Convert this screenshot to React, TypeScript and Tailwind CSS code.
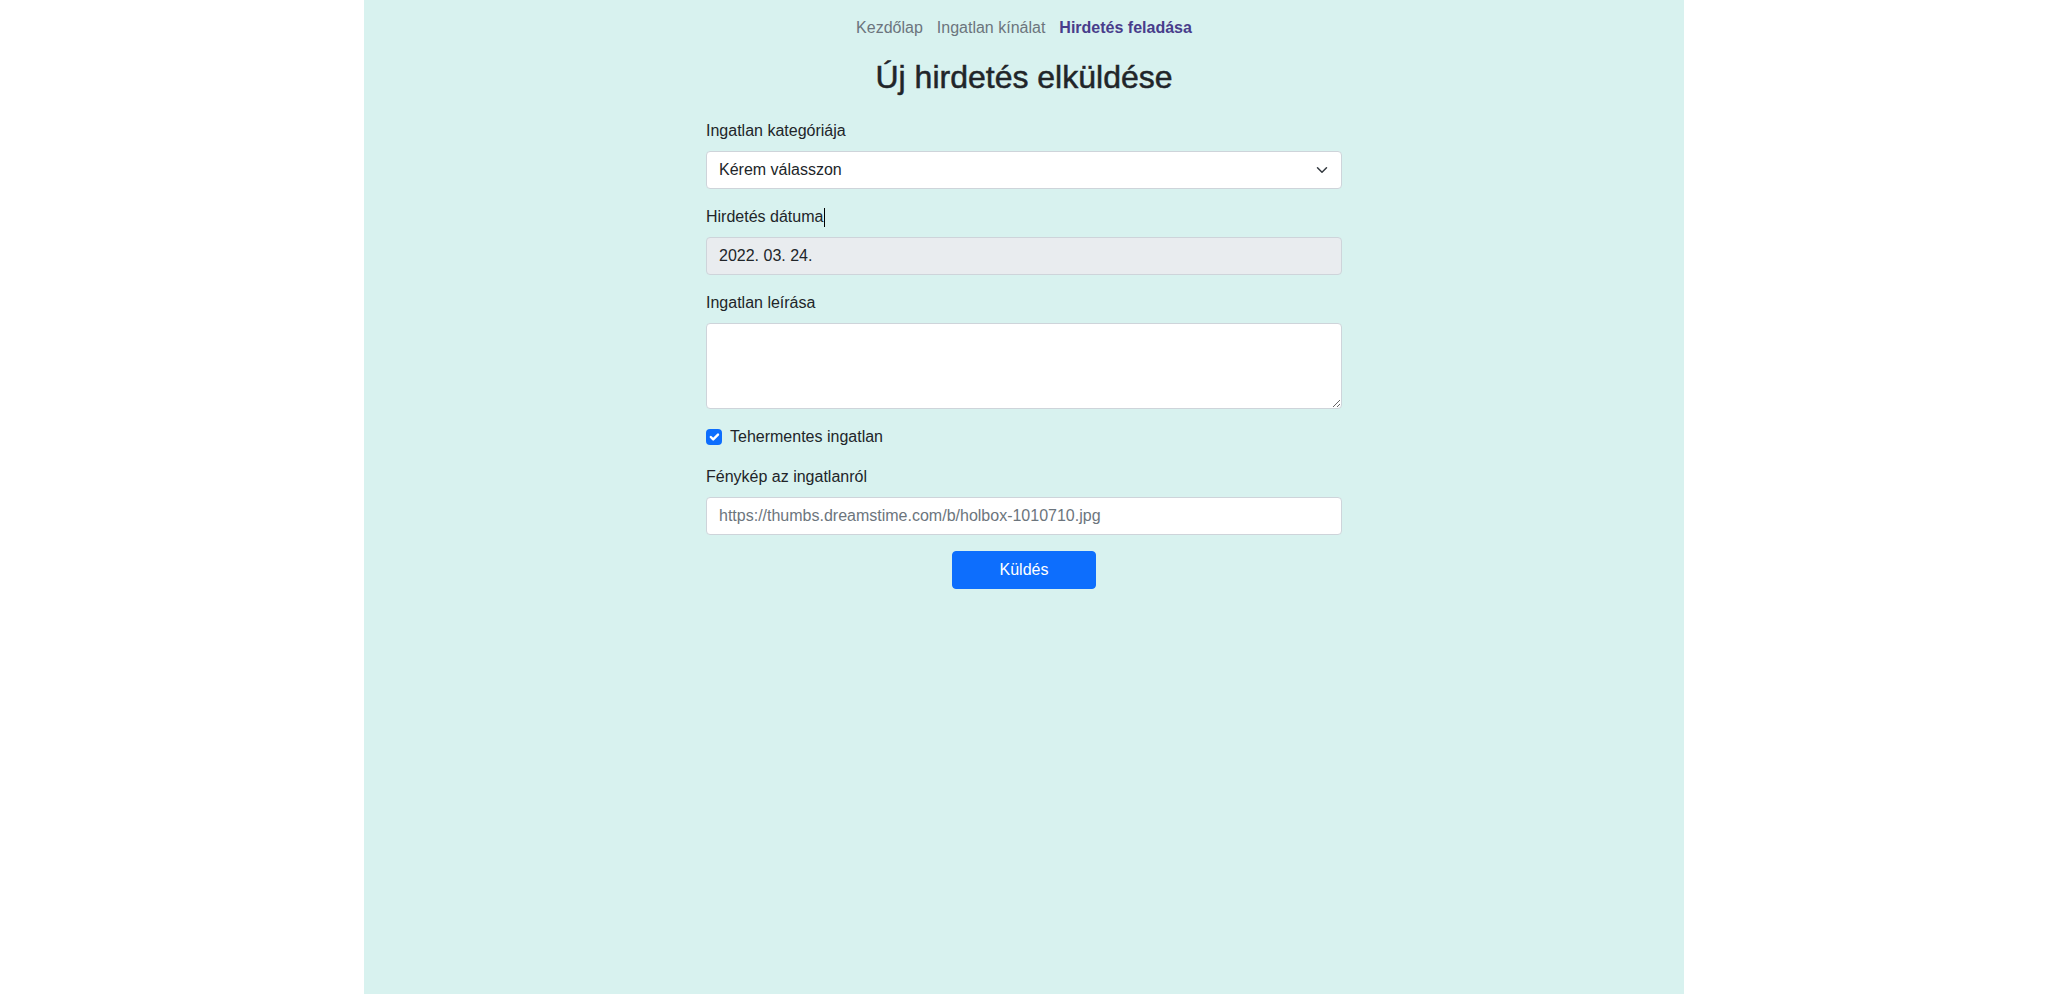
export default function App() {
  return (
    <div className="min-h-screen bg-white font-['Liberation_Sans',Arial,sans-serif] text-[#212529]">
      <div className="mx-auto min-h-screen w-[1320px] bg-[#d8f2ef] px-3">
        <nav className="flex justify-center pt-2 text-base leading-6">
          <a href="#" className="px-[7px] py-2 text-[#6c757d]">
            Kezdőlap
          </a>
          <a href="#" className="px-[7px] py-2 text-[#6c757d]">
            Ingatlan kínálat
          </a>
          <a href="#" className="px-[7px] py-2 font-bold text-[#483d8b]">
            Hirdetés feladása
          </a>
        </nav>

        <h1 className="mt-[10px] text-center text-[32px] font-medium leading-[38px] [-webkit-text-stroke:0.5px_#212529]">
          Új hirdetés elküldése
        </h1>

        <form className="mx-auto mt-[23px] w-[636px] text-base leading-6">
          <div className="mb-4">
            <label className="mb-2 block">Ingatlan kategóriája</label>
            <div className="relative">
              <select className="block h-[38px] w-full appearance-none rounded border border-[#ced4da] bg-white pl-3 pr-9 text-base text-[#212529] outline-none">
                <option>Kérem válasszon</option>
                <option>Ház</option>
                <option>Lakás</option>
                <option>Telek</option>
              </select>
              <svg
                className="pointer-events-none absolute right-3 top-1/2 h-3 w-4 -translate-y-1/2"
                viewBox="0 0 16 16"
                fill="none"
                stroke="#343a40"
                strokeWidth="2"
                strokeLinecap="round"
                strokeLinejoin="round"
              >
                <path d="m2 5 6 6 6-6" />
              </svg>
            </div>
          </div>

          <div className="mb-4">
            <label className="mb-2 flex items-center">
              Hirdetés dátuma
              <span className="ml-px inline-block h-[19px] w-px bg-black" />
            </label>
            <input
              type="text"
              readOnly
              value="2022. 03. 24."
              className="block h-[38px] w-full rounded border border-[#ced4da] bg-[#e9ecef] px-3 text-base text-[#212529] outline-none"
            />
          </div>

          <div className="mb-4">
            <label className="mb-2 block">Ingatlan leírása</label>
            <textarea
              rows={3}
              className="block h-[86px] w-full resize-y rounded border border-[#ced4da] bg-white px-3 py-1.5 text-base outline-none"
            />
          </div>

          <div className="mb-4 flex min-h-6 items-center">
            <span className="flex h-4 w-4 items-center justify-center rounded-[4px] bg-[#0d6efd]">
              <svg viewBox="0 0 20 20" className="h-4 w-4" fill="none">
                <path
                  d="m6 10 3 3 6-6"
                  stroke="#fff"
                  strokeWidth="3"
                  strokeLinecap="round"
                  strokeLinejoin="round"
                />
              </svg>
            </span>
            <label className="ml-2">Tehermentes ingatlan</label>
          </div>

          <div className="mb-4">
            <label className="mb-2 block">Fénykép az ingatlanról</label>
            <input
              type="text"
              placeholder="https://thumbs.dreamstime.com/b/holbox-1010710.jpg"
              className="block h-[38px] w-full rounded border border-[#ced4da] bg-white px-3 text-base text-[#212529] outline-none placeholder:text-[#6c757d]"
            />
          </div>

          <div className="flex justify-center">
            <button
              type="submit"
              className="h-[38px] w-[144px] rounded border border-[#0d6efd] bg-[#0d6efd] text-base text-white"
            >
              Küldés
            </button>
          </div>
        </form>
      </div>
    </div>
  );
}
